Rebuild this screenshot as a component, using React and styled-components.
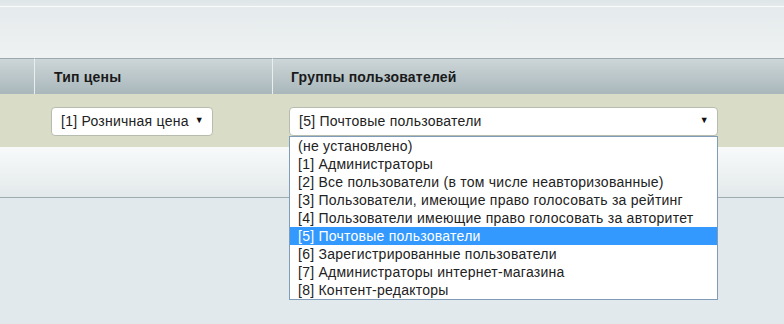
import React from 'react';
import styled, { createGlobalStyle } from 'styled-components';

const GlobalStyle = createGlobalStyle`
   html, body {
      margin: 0;
      padding: 0;
      background: #e2e9ec;
      font-family: "Liberation Sans", Arial, sans-serif;
      font-size: 14px;
      letter-spacing: 0.25px;
      color: #222;
   }
`;

const Page = styled.div`
   width: 784px;
   height: 324px;
   overflow: hidden;
   background: #e2e9ec;
`;

const TopStrip = styled.div`
   height: 6px;
   background: linear-gradient(#dfe6e8, #e4eaec);
   border-bottom: 1px solid #fafbfb;
`;

const TopPanel = styled.div`
   height: 51px;
   background: linear-gradient(#e5eaec, #eef2f2);
`;

const Grid = styled.div`
   display: grid;
   grid-template-columns: 34px 238px 1fr;
`;

const HeadCell = styled.div`
   box-sizing: border-box;
   height: 36px;
   display: flex;
   align-items: center;
   padding-left: ${p => p.$pad || 0}px;
   border-top: 1px solid #9ca9ae;
   border-left: ${p => (p.$first ? 'none' : '1px solid #e9eeef')};
   background: linear-gradient(#cdd6d8, #a9b7bb);
   font-weight: bold;
   letter-spacing: 0.2px;
   color: #1a1a1a;
`;

const RowCell = styled.div`
   height: 53px;
   display: flex;
   align-items: center;
   padding-left: ${p => p.$pad || 0}px;
   background: #d9dcc6;
   position: relative;
`;

const Select = styled.div`
   box-sizing: border-box;
   width: ${p => p.$w}px;
   height: 29px;
   display: flex;
   align-items: center;
   justify-content: space-between;
   padding: 0 8px 0 9px;
   background: #fff;
   border: 1px solid #b6bcae;
   border-radius: 4px;
   color: #222;
   margin-top: 1px;
`;

const Arrow = styled.span`
   font-size: 9px;
   color: #111;
   margin-top: -2px;
`;

const List = styled.ul`
   position: absolute;
   left: 17px;
   top: 42px;
   width: 429px;
   box-sizing: border-box;
   margin: 0;
   padding: 0;
   list-style: none;
   background: #fff;
   border: 1px solid #7f9db9;
   z-index: 2;
`;

const Item = styled.li`
   height: 18px;
   line-height: 18px;
   padding-left: 8px;
   white-space: nowrap;
   color: ${p => (p.$active ? '#fff' : '#222')};
   background: ${p => (p.$active ? '#3399ff' : 'transparent')};
`;

const Footer = styled.div`
   height: 50px;
   background: linear-gradient(#f8fafa, #e3e9eb);
   border-bottom: 1px solid #9eacb2;
`;

const groups = [
   '(не установлено)',
   '[1] Администраторы',
   '[2] Все пользователи (в том числе неавторизованные)',
   '[3] Пользователи, имеющие право голосовать за рейтинг',
   '[4] Пользователи имеющие право голосовать за авторитет',
   '[5] Почтовые пользователи',
   '[6] Зарегистрированные пользователи',
   '[7] Администраторы интернет-магазина',
   '[8] Контент-редакторы'
];

const App = () => (
   <Page>
      <GlobalStyle />
      <TopStrip />
      <TopPanel />
      <Grid>
         <HeadCell $first />
         <HeadCell $pad={19}>Тип цены</HeadCell>
         <HeadCell $pad={18}>Группы пользователей</HeadCell>
         <RowCell />
         <RowCell $pad={17}>
            <Select $w={162}>
               <span>[1] Розничная цена</span>
               <Arrow>&#9660;</Arrow>
            </Select>
         </RowCell>
         <RowCell $pad={17}>
            <Select $w={429}>
               <span>[5] Почтовые пользователи</span>
               <Arrow>&#9660;</Arrow>
            </Select>
            <List>
               {groups.map((g, i) => (
                  <Item key={g} $active={i === 5}>{g}</Item>
               ))}
            </List>
         </RowCell>
      </Grid>
      <Footer />
   </Page>
);

export default App;
